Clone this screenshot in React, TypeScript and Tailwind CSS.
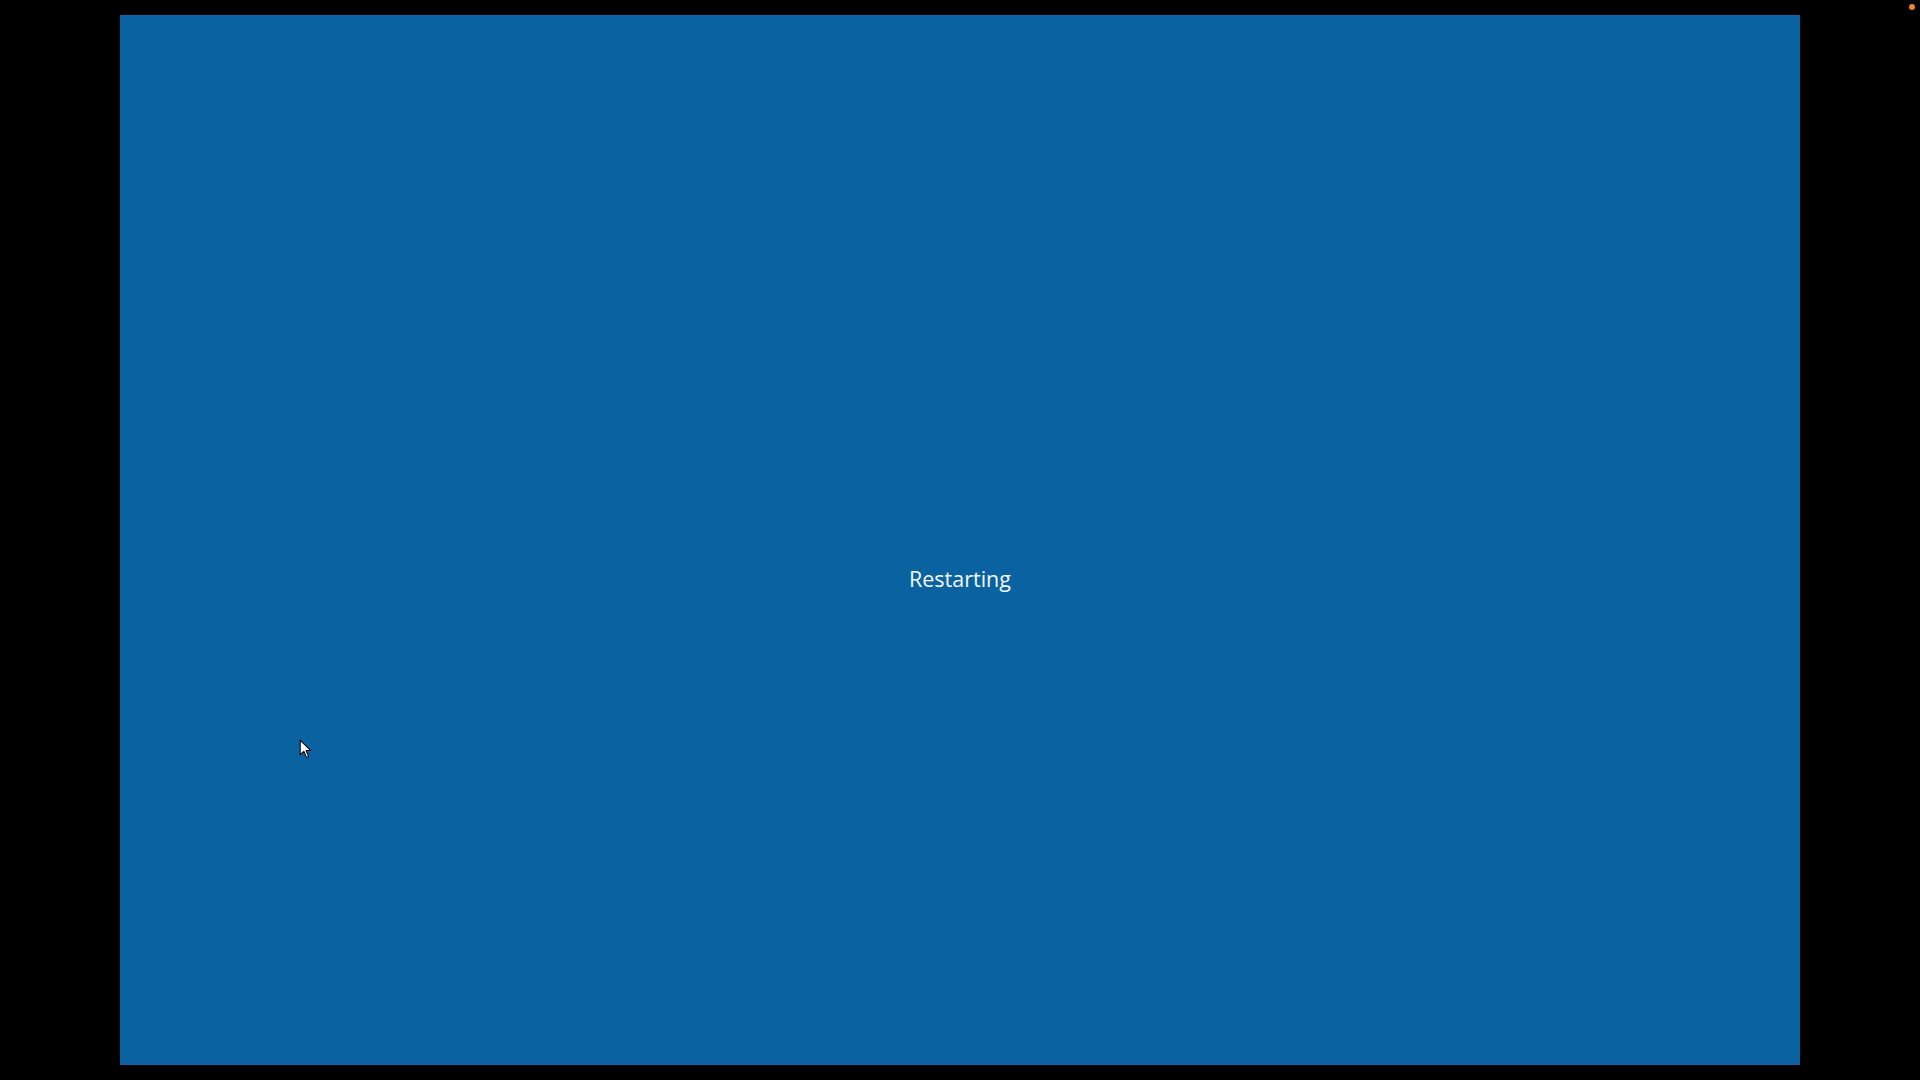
export default function App() {
  return (
    <div className="relative w-[1920px] h-[1080px] bg-black overflow-hidden">
      <div className="pt-[15px] pl-[120px]">
        <div className="w-[1680px] h-[1050px] bg-[#0a62a1] flex flex-col items-center pt-[549px]">
          <span
            className="text-[21.5px] leading-[30px] text-[#f4f8fc]"
            style={{ fontFamily: '"Open Sans", "Noto Sans", sans-serif' }}
          >
            Restarting
          </span>
        </div>
      </div>

      {/* mouse pointer */}
      <svg
        className="absolute left-[299px] top-[739px]"
        width="15"
        height="21"
        viewBox="0 0 14 20"
      >
        <path
          d="M1 1 L1 15 L4.5 11.8 L7 17.5 L9 16.6 L6.6 11 L11 11 Z"
          fill="#ffffff"
          stroke="#000000"
          strokeWidth="1"
          strokeLinejoin="round"
        />
      </svg>

      {/* recording dot */}
      <div className="absolute left-[1909px] top-[4px] w-[6px] h-[6px] rounded-full bg-[#e8882c]" />
    </div>
  );
}
